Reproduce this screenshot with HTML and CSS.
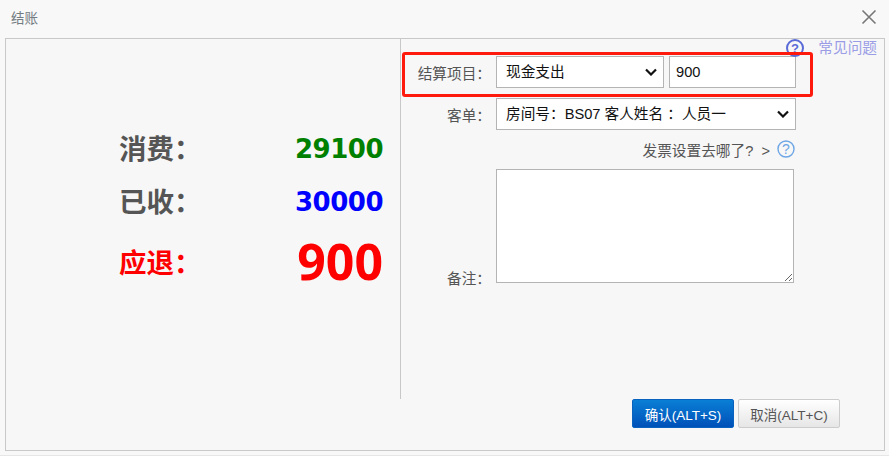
FILE: index.html
```html
<!DOCTYPE html>
<html lang="zh-CN">
<head>
    <meta charset="UTF-8">
    <title>结账</title>
    <link rel="stylesheet" href="styles.css">
</head>
<body>
    <div class="dialog">
        <div class="dialog-head">
            <span class="dialog-title">结账</span>
            <svg class="close-icon" width="16" height="16" viewBox="0 0 16 16"><path d="M1.5 1.5 14.5 14.5M14.5 1.5 1.5 14.5" stroke="#777" stroke-width="1.6" fill="none"/></svg>
        </div>
        <div class="dialog-body">
            <a class="faq-link">
                <svg class="faq-icon" width="18" height="18" viewBox="0 0 18 18"><circle cx="9" cy="9" r="8" stroke="#5a6bd8" stroke-width="2" fill="none"/><text x="9" y="13.5" text-anchor="middle" class="icon-mark" fill="#5a6bd8">?</text></svg>
                <span>常见问题</span>
            </a>
            <div class="highlight-box"></div>
            <div class="main">
                <div class="summary">
                    <div class="summary-row">
                        <span class="summary-label">消费：</span>
                        <span class="summary-value green">29100</span>
                    </div>
                    <div class="summary-row">
                        <span class="summary-label">已收：</span>
                        <span class="summary-value blue">30000</span>
                    </div>
                    <div class="summary-row refund">
                        <span class="summary-label red">应退：</span>
                        <span class="summary-value red big">900</span>
                    </div>
                </div>
                <form class="pay-form">
                    <div class="form-row">
                        <label class="form-label">结算项目：</label>
                        <select class="field select-type"><option>现金支出</option></select>
                        <input class="field input-amount" type="text" value="900">
                    </div>
                    <div class="form-row">
                        <label class="form-label">客单：</label>
                        <select class="field select-order"><option>房间号：BS07 客人姓名 ：人员一</option></select>
                    </div>
                    <div class="invoice-row">
                        <span>发票设置去哪了? &nbsp;&gt;</span>
                        <svg width="18" height="18" viewBox="0 0 18 18"><circle cx="9" cy="9" r="8" stroke="#6ea6e6" stroke-width="1.4" fill="none"/><text x="9" y="13.8" text-anchor="middle" class="icon-mark thin" fill="#6ea6e6">?</text></svg>
                    </div>
                    <div class="form-row note-row">
                        <label class="form-label">备注：</label>
                        <textarea class="field note"></textarea>
                    </div>
                </form>
            </div>
            <div class="actions">
                <button class="btn btn-primary" type="button">确认(ALT+S)</button>
                <button class="btn btn-default" type="button">取消(ALT+C)</button>
            </div>
        </div>
    </div>
</body>
</html>
```
FILE: styles.css
```css
:root {
    --border-color: #c8c8c8;
    --text-color: #555555;
    --ui-font: "Liberation Sans", "Noto Sans CJK SC", sans-serif;
}

html, body {
    margin: 0;
    height: 100%;
    overflow: hidden;
    background-color: #f7f7f7;
    font-family: var(--ui-font);
    color: var(--text-color);
}

.dialog {
    display: flex;
    flex-direction: column;
    height: 456px;
    box-sizing: border-box;
    padding: 0 4px 4px 5px;
    background-color: #f8f8f8;
    border-bottom: 1px solid #e6e6e6;
}

.dialog-head {
    display: flex;
    justify-content: space-between;
    align-items: center;
    height: 38px;
    flex-shrink: 0;
    box-sizing: border-box;
    padding: 0 8px 4px 6px;
}

.dialog-title {
    font-size: 13.5px;
    color: #737b82;
}

.dialog-body {
    position: relative;
    flex: 1;
    border: 1px solid var(--border-color);
    background-color: #f7f7f7;
}

/* these two sit over the form, the red box is a mark made on the screenshot */
.faq-link {
    position: absolute;
    top: 0;
    right: 7px;
    display: flex;
    align-items: center;
    gap: 14px;
    font-size: 14.67px;
    line-height: 18px;
    color: #9a9de6;
}

.highlight-box {
    position: absolute;
    top: 13px;
    left: 396px;
    width: 411px;
    height: 45px;
    box-sizing: border-box;
    border: 3px solid #ff1a0e;
    border-radius: 3px;
}

.icon-mark {
    font-family: "Liberation Sans", sans-serif;
    font-size: 13px;
    font-weight: bold;
}

.icon-mark.thin {
    font-size: 14px;
    font-weight: normal;
}

.main {
    display: flex;
    height: 360px;
}

.summary {
    width: 395px;
    box-sizing: border-box;
    padding: 88px 17px 0 113px;
    border-right: 1px solid var(--border-color);
}

.summary-row {
    display: flex;
    justify-content: space-between;
    align-items: center;
    height: 40px;
    margin-bottom: 13px;
}

.refund {
    height: 56px;
    margin-top: 11px;
}

.summary-label {
    font-size: 27.5px;
    font-weight: bold;
    color: var(--text-color);
}

.summary-value {
    margin-top: 4px;
    font-family: "DejaVu Sans", sans-serif;
    font-size: 26px;
    letter-spacing: -0.5px;
    font-weight: bold;
}

.green { color: #008000; }
.blue { color: #0000ff; }
.summary-label.red, .red { color: #ff0000; }

.big {
    margin-top: 0;
    font-family: "Noto Sans", sans-serif;
    font-size: 50px;
    letter-spacing: 0;
}

.pay-form {
    flex: 1;
    padding-top: 17px;
}

.form-row {
    display: flex;
    align-items: center;
    margin-bottom: 10px;
}

.form-label {
    width: 90px;
    margin-right: 5px;
    text-align: right;
    font-size: 14.67px;
    white-space: nowrap;
}

.field {
    box-sizing: border-box;
    height: 32px;
    margin: 0;
    padding: 0 9px;
    border: 1px solid #b4b4b4;
    border-radius: 0;
    background-color: #ffffff;
    font-family: var(--ui-font);
    font-size: 14.67px;
    color: #111111;
    outline: none;
}

select.field {
    appearance: none;
    background-image: url("data:image/svg+xml,%3Csvg xmlns='http://www.w3.org/2000/svg' width='12' height='8'%3E%3Cpath d='M1 1.5 6 6.5l5-5' stroke='%23111' stroke-width='2.2' fill='none'/%3E%3C/svg%3E");
    background-repeat: no-repeat;
    background-position: right 6px center;
}

.select-type {
    width: 168px;
}

.input-amount {
    width: 127px;
    margin-left: 5px;
    padding: 0 6px;
}

.select-order {
    width: 300px;
}

.invoice-row {
    display: flex;
    justify-content: flex-end;
    align-items: center;
    gap: 7px;
    width: 394px;
    height: 18px;
    margin-bottom: 11px;
    font-size: 14.67px;
}

.note-row {
    align-items: flex-end;
}

.note-row .form-label {
    line-height: 20px;
    margin-bottom: -6px;
}

.note {
    display: block;
    width: 298px;
    height: 114px;
    padding: 4px;
}

.actions {
    display: flex;
    justify-content: flex-end;
    gap: 4px;
    padding-right: 44px;
}

.btn {
    box-sizing: border-box;
    width: 102px;
    height: 29px;
    padding: 0;
    border-radius: 2px;
    font-family: var(--ui-font);
    font-size: 13.5px;
    cursor: pointer;
}

.btn-primary {
    border: 1px solid #0a62bf;
    background: linear-gradient(#0a7fd6, #0050b8);
    color: #ffffff;
}

.btn-default {
    border: 1px solid #cccccc;
    background: linear-gradient(#ffffff, #e6e6e6);
    color: var(--text-color);
}
```
